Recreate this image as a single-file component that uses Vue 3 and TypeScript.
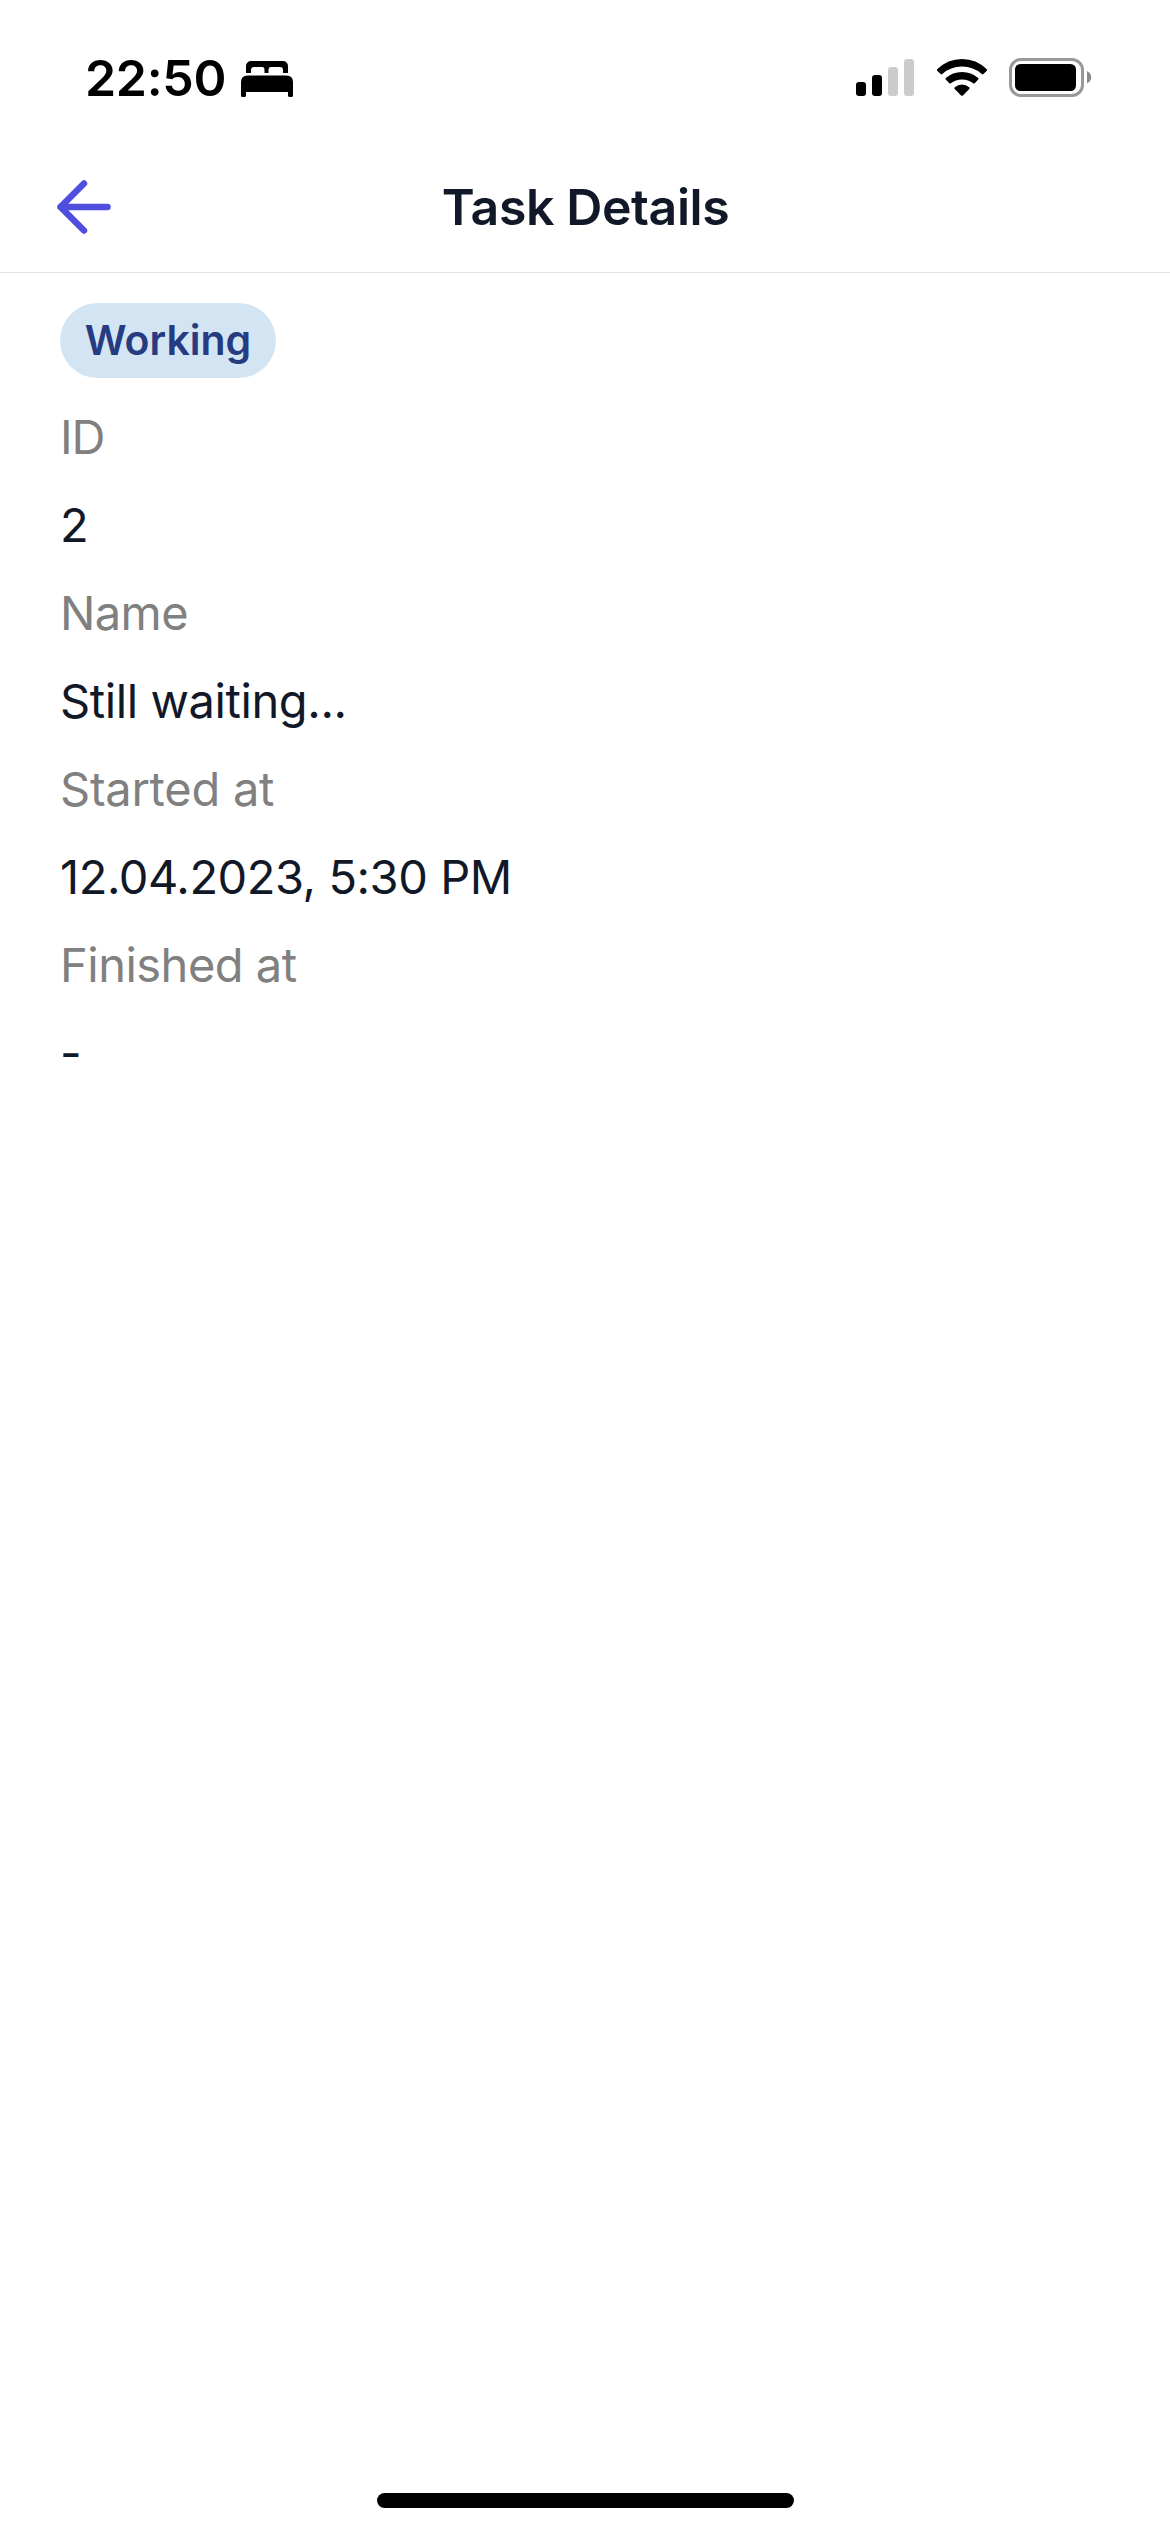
<script setup lang="ts">
interface Line {
  text: string
  kind: 'label' | 'value'
  spacing: number
}

const time = '22:50'
const title = 'Task Details'
const status = 'Working'

const lines: Line[] = [
  { text: 'ID', kind: 'label', spacing: -1 },
  { text: '2', kind: 'value', spacing: 0 },
  { text: 'Name', kind: 'label', spacing: -0.6 },
  { text: 'Still waiting...', kind: 'value', spacing: -0.4 },
  { text: 'Started at', kind: 'label', spacing: -0.25 },
  { text: '12.04.2023, 5:30 PM', kind: 'value', spacing: -0.45 },
  { text: 'Finished at', kind: 'label', spacing: -0.5 },
  { text: '-', kind: 'value', spacing: 0 },
]
</script>

<template>
  <div class="screen">
    <div class="status-bar">
      <div class="clock">
        <span class="time">{{ time }}</span>
        <svg class="bed" width="52" height="36" viewBox="0 0 52 36">
          <path d="M5 12V5a5 5 0 0 1 5-5h32a5 5 0 0 1 5 5v7h-5V9q0-3-3-3H30q-2.500 0-2.500 3v3h-4V9q0-3-2.500-3h-8q-3 0-3 3v3z" />
          <path d="M0 34.500V21q0-6.500 6.500-6.500h39q6.500 0 6.500 6.500v13.500q0 1.500-1.500 1.500H48.500q-1.500 0-1.500-1.500V31H5v3.500Q5 36 3.500 36h-2Q0 36 0 34.500z" />
        </svg>
      </div>
      <div class="indicators">
        <svg width="58" height="38" viewBox="0 0 58 38">
          <rect x="0" y="23" width="10" height="14" rx="3" />
          <rect x="16" y="16" width="10" height="21" rx="3" />
          <rect class="dim" x="32" y="8" width="10" height="29" rx="3" />
          <rect class="dim" x="48" y="0" width="10" height="37" rx="3" />
        </svg>
        <svg class="wifi" width="52" height="38" viewBox="935.500 59 52 38">
          <path d="M936.700 69.300Q947 59 961.500 59T986.300 69.300q.7.800 0 1.500l-3.400 3.300q-.8.800-1.600 0Q973 66.600 961.500 66.600T941.700 74.100q-.8.800-1.600 0l-3.400-3.300q-.7-.7 0-1.500z" />
          <path d="M945.300 78.100Q952 72 961.500 72T977.700 78.100q.8.800 0 1.500l-3.500 3.600q-.7.700-1.500 0Q968 79.400 961.500 79.400T950.300 83.200q-.8.700-1.500 0l-3.500-3.600q-.8-.7 0-1.500z" />
          <path d="M954.300 87.200Q957.500 84.600 961.500 84.600T968.700 87.200q1 .8.100 1.700l-6.400 6.500q-.9.900-1.800 0l-6.400-6.500q-.9-.9.100-1.700z" />
        </svg>
        <svg class="battery" width="83" height="39" viewBox="0 0 83 39">
          <rect class="shell" x="1.500" y="1.500" width="72" height="36" rx="10.500" />
          <rect x="6" y="6" width="61" height="27" rx="5.500" />
          <path class="cap" d="M78 13q4.200 2.200 4.200 6.300T78 25.500z" />
        </svg>
      </div>
    </div>

    <header class="header">
      <button class="back" type="button" aria-label="Back">
        <svg width="54" height="54" viewBox="0 0 54 54">
          <path d="M50.500 27H3.500M27 3.500L3.500 27 27 50.500" />
        </svg>
      </button>
      <h1 class="title">{{ title }}</h1>
    </header>

    <main class="content">
      <span class="badge">{{ status }}</span>
      <div
        v-for="line in lines"
        :key="line.text"
        :class="['line', line.kind]"
        :style="{ letterSpacing: line.spacing + 'px' }"
      >{{ line.text }}</div>
    </main>

    <div class="home-indicator"></div>
  </div>
</template>

<style>
body {
  margin: 0;
  background: #fff;
}
</style>

<style scoped>
.screen {
  display: flex;
  flex-direction: column;
  width: 1170px;
  height: 2532px;
  background: #fff;
  color: #111827;
  font-family: Inter, "Liberation Sans", sans-serif;
  overflow: hidden;
}
.status-bar {
  display: flex;
  justify-content: space-between;
  box-sizing: border-box;
  height: 141px;
  padding: 58px 78px 0 85px;
  color: #000;
}
.clock {
  display: flex;
  align-items: flex-start;
}
.time {
  width: 156px;
  font-size: 50px;
  font-weight: 600;
  line-height: 40px;
  letter-spacing: -0.3px;
  white-space: nowrap;
}
.bed {
  margin-top: 3px;
}
.indicators {
  display: flex;
  align-items: flex-start;
}
.indicators svg:first-child,
.wifi {
  margin-top: 1px;
}
.wifi {
  margin-left: 22px;
}
.battery {
  margin-left: 21px;
}
.dim {
  fill: #ccc;
}
.shell {
  fill: none;
  stroke: #999;
  stroke-width: 3;
}
.cap {
  fill: #8c8c8c;
}
.header {
  display: grid;
  grid-template-columns: 120px 1fr 120px;
  align-items: center;
  box-sizing: border-box;
  height: 132px;
  border-bottom: 1px solid #e2e3ea;
}
.back {
  display: flex;
  margin: 0 0 0 57px;
  padding: 0;
  border: 0;
  background: none;
}
.back path {
  fill: none;
  stroke: #504edc;
  stroke-width: 6.5;
  stroke-linecap: round;
  stroke-linejoin: round;
}
.title {
  margin: 0;
  padding-left: 1px;
  font-size: 50px;
  font-weight: 600;
  line-height: 60px;
  text-align: center;
  letter-spacing: -0.4px;
}
.content {
  display: flex;
  flex: 1;
  flex-direction: column;
  align-items: flex-start;
  padding: 30px 60px 0;
}
.badge {
  box-sizing: border-box;
  width: 216px;
  height: 75px;
  margin-bottom: 15px;
  border-radius: 38px;
  background: #d3e5f3;
  color: #263b80;
  font-size: 41px;
  font-weight: 600;
  line-height: 74px;
  text-align: center;
}
.line {
  height: 88px;
  font-size: 47px;
  line-height: 88px;
  white-space: nowrap;
}
.label {
  color: #808080;
}
.home-indicator {
  align-self: center;
  width: 417px;
  height: 15px;
  margin-bottom: 24px;
  border-radius: 8px;
  background: #000;
}
</style>
